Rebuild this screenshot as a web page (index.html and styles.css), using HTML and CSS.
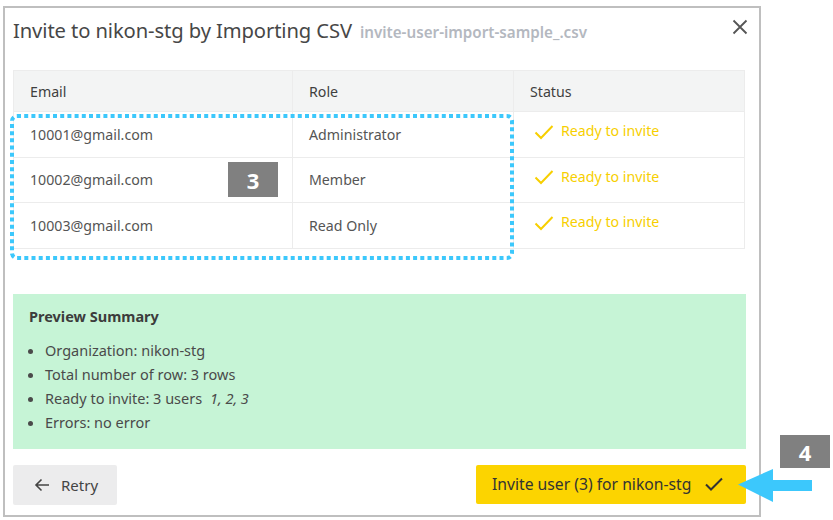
FILE: index.html
```html
<!DOCTYPE html>
<html>
<head>
<meta charset="utf-8">
<link rel="stylesheet" href="styles.css">
</head>
<body>
<div class="stage">
  <div class="dialog">
    <div class="head">
      <h1 class="title">Invite to nikon-stg by Importing CSV</h1>
      <span class="file">invite-user-import-sample_.csv</span>
      <svg class="close" width="16" height="16" viewBox="0 0 16 16"><path d="M1.5 1.5 L14.5 14.5 M14.5 1.5 L1.5 14.5" stroke="#555" stroke-width="1.8" fill="none"/></svg>
    </div>
    <div class="table-wrap">
      <table class="grid">
        <thead>
          <tr><th class="c1">Email</th><th class="c2">Role</th><th class="c3">Status</th></tr>
        </thead>
        <tbody>
          <tr><td>10001@gmail.com</td><td>Administrator</td><td><span class="ok"><svg width="20" height="16" viewBox="0 0 20 16"><path d="M1.5 8.5 L7 14 L18.5 2" stroke="#f7cf00" stroke-width="2" fill="none"/></svg>Ready to invite</span></td></tr>
          <tr><td>10002@gmail.com</td><td>Member</td><td><span class="ok"><svg width="20" height="16" viewBox="0 0 20 16"><path d="M1.5 8.5 L7 14 L18.5 2" stroke="#f7cf00" stroke-width="2" fill="none"/></svg>Ready to invite</span></td></tr>
          <tr><td>10003@gmail.com</td><td>Read Only</td><td><span class="ok"><svg width="20" height="16" viewBox="0 0 20 16"><path d="M1.5 8.5 L7 14 L18.5 2" stroke="#f7cf00" stroke-width="2" fill="none"/></svg>Ready to invite</span></td></tr>
        </tbody>
      </table>
      <svg class="dots" width="504" height="146" viewBox="0 0 504 146"><rect x="2" y="2" width="500" height="142" rx="5" ry="5" fill="none" stroke="#3cc8fc" stroke-width="4" stroke-dasharray="4 3.2"/></svg>
      <div class="badge badge3">3</div>
    </div>
    <div class="summary">
      <div class="sum-title">Preview Summary</div>
      <ul class="sum-list">
        <li>Organization: nikon-stg</li>
        <li>Total number of row: 3 rows</li>
        <li>Ready to invite: 3 users <em>1, 2, 3</em></li>
        <li>Errors: no error</li>
      </ul>
    </div>
    <div class="actions">
      <button class="btn retry"><svg width="16" height="14" viewBox="0 0 16 14"><path d="M15 7 H2 M7.5 1.5 L2 7 L7.5 12.5" stroke="#444" stroke-width="1.6" fill="none"/></svg>Retry</button>
      <button class="btn invite">Invite user (3) for nikon-stg<svg width="18" height="14" viewBox="0 0 18 14"><path d="M1 7.5 L6 12.5 L17 1.5" stroke="#333" stroke-width="2" fill="none"/></svg></button>
    </div>
  </div>
  <div class="badge badge4">4</div>
  <svg class="arrow" width="76" height="34" viewBox="0 0 76 34"><path d="M0 15.5 L35 0 L35 11 L74 11 L74 22 L35 22 L35 33 Z" fill="#3cc8fc"/></svg>
</div>
</body>
</html>
```
FILE: styles.css
```css
* { box-sizing: border-box; }
html, body { margin: 0; padding: 0; background: #fff; }
body { font-family: "Noto Sans", "Open Sans", sans-serif; color: #444; }
.stage { position: relative; width: 833px; height: 520px; padding: 6px 0 0 3px; }
.dialog {
  position: relative;
  width: 758px;
  height: 511px;
  border: 2px solid #bfbfbf;
  padding: 8px 13px 0 8px;
  display: flex;
  flex-direction: column;
}
.head { display: flex; align-items: baseline; height: 54px; }
.title { margin: 0; font-size: 20.2px; font-weight: 400; color: #474747; line-height: 28px; letter-spacing: -0.1px; }
.file { margin-left: 8px; font-size: 15.2px; font-weight: 600; color: #b4b8bf; }
.close { margin-left: auto; align-self: flex-start; margin-top: 3px; margin-right: -2px; }
.table-wrap { position: relative; }
.grid { width: 732px; border-collapse: collapse; font-size: 14.2px; color: #555; }
.grid th { background: #f3f4f4; text-align: left; font-weight: 400; color: #3f3f3f; height: 41px; padding: 0 0 0 16px; border: 1px solid #ececec; }
.grid td { height: 45.5px; padding: 0 0 0 16px; border: 1px solid #ececec; }
.grid .c1 { width: 279px; }
.grid .c2 { width: 221px; }
.ok { display: inline-flex; align-items: center; color: #f7cf00; margin-top: -4px; }
.ok svg { margin: 2px 7px 0 4px; }
.dots { position: absolute; left: -3px; top: 44px; }
.badge { position: absolute; background: #808080; color: #fff; font-weight: 700; font-size: 22px; display: flex; align-items: center; justify-content: center; font-family: "Open Sans", "Noto Sans", sans-serif; }
.badge3 { left: 215px; top: 92px; width: 50px; height: 35px; }
.badge4 { left: 780px; top: 435px; width: 50px; height: 33px; }
.arrow { position: absolute; left: 738px; top: 469px; }
.summary { margin-top: 45px; background: #c6f4d6; height: 155px; padding: 11px 16px 0 16px; font-size: 14.5px; color: #4a4a4a; }
.sum-title { font-weight: 700; font-size: 14.5px; color: #3c3c3c; line-height: 22px; }
.sum-list { margin: 11px 0 0 0; padding-left: 16px; line-height: 24.3px; }
.sum-list li { padding-left: 0; }
.sum-list em { margin-left: 4px; }
.actions { display: flex; justify-content: space-between; margin-top: 16px; }
.btn { border: none; font-family: inherit; font-size: 15px; height: 40px; display: flex; align-items: center; border-radius: 2px; }
.retry { background: #ececed; color: #444; width: 104px; padding: 0 0 0 21px; }
.retry svg { margin-right: 11px; }
.invite { background: #fcd400; color: #333; width: 270px; padding: 0 0 0 16px; height: 39px; font-size: 15.7px; }
.invite svg { margin-left: 14px; }
```
